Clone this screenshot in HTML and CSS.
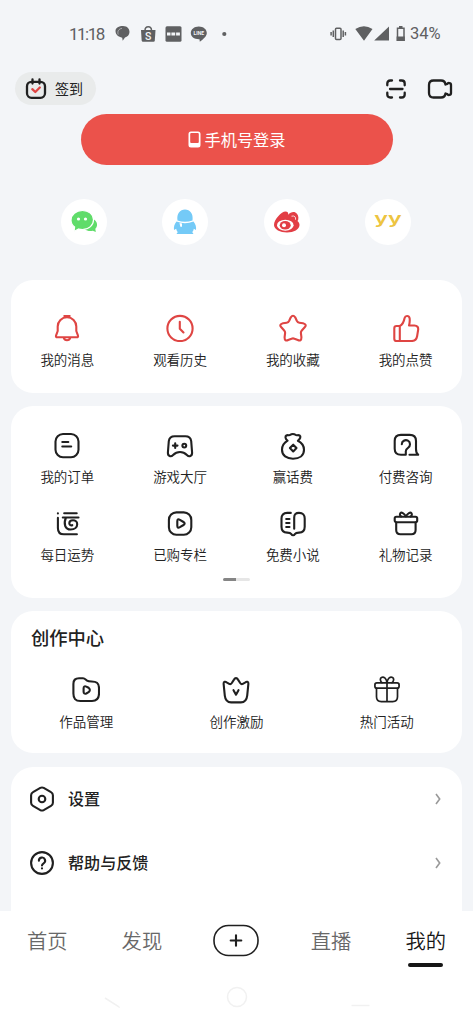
FILE: index.html
```html
<!DOCTYPE html>
<html lang="zh-CN">
<head>
<meta charset="utf-8">
<title>我的</title>
<link rel="stylesheet" href="styles.css">
</head>
<body>
<div class="screen">
  <main class="content">
    <div class="status">
      <span class="clock">11:18</span>
      <svg class="apps" width="116" height="20" viewBox="0 0 116 20">
        <path d="M1.500 7C1.500 3.500 5 2 9 2c4.500 0 6.500 3 6.500 6 0 3-2.300 5-4.500 5.500l-2.300 3.200-.5-3C4.500 13 1.500 10.500 1.500 7z"/>
        <path class="knock" d="M4.200 10.500C3.200 7.500 4.500 5 8 4.300"/>
        <path d="M27 6h14.500l-.7 10.500q-.1 1.200-1.300 1.200h-10.500q-1.200 0-1.300-1.200z"/>
        <path class="ring" d="M31 6.500C31 1.500 37.500 1.500 37.500 6.500"/>
        <text class="mark light" x="34.300" y="15.500" font-size="10.500">S</text>
        <rect x="51.500" y="2.300" width="16" height="15.500" rx="1.500"/>
        <path class="boxes" d="M53 10h3.500M57.400 10h3.800M62.100 10h3.800"/>
        <path d="M84.800 2.500c4.600 0 8 2.900 8 6.500 0 3.200-3.200 6-7 8.700l-.3-2.500c-5.200.2-8.700-2.500-8.700-6.200 0-3.600 3.400-6.500 8-6.500z"/>
        <text class="mark" x="84.800" y="10.800" font-size="5">LINE</text>
        <circle cx="110.300" cy="10" r="2.100"/>
      </svg>
      <svg class="signals" width="76" height="20" viewBox="0 0 76 20">
        <rect class="ring" x="5.500" y="4.200" width="5.500" height="11.300" rx="1"/>
        <path class="ring" d="M3.300 6.500v6.500M1.100 8v3.500M13.200 6.500v6.500M15.400 8v3.500"/>
        <path d="M25.300 5Q34-.5 42.500 5L34 16.700zM59 2.500v14H44.200z"/>
        <path class="ring" d="M67.500 4.300h6.500v12h-6.500z"/>
        <path d="M69 2h3.500v2H69zM66.600 12.500h8.200v4.500h-8.200z"/>
      </svg>
      <span class="percent">34%</span>
    </div>

    <header class="top">
      <button class="signin">
        <svg class="ico" width="22" height="22" viewBox="0 0 22 22"><rect x="2" y="3.800" width="18" height="16" rx="4.500"/><path d="M7.500 1.500v4M14.500 1.500v4"/><path class="red" d="M7.300 11.200l3 2.800 4.500-4.500"/></svg>
        <span>签到</span>
      </button>
      <svg class="ico scan" width="22" height="22" viewBox="0 0 22 22"><path d="M2.300 7.300V5.500q0-3 3-3H7M15 2.500h1.700q3 0 3 3v1.800M19.700 14.700v1.800q0 3-3 3H15M7 19.500H5.300q-3 0-3-3v-1.800M5 11h12.500"/></svg>
      <svg class="ico" width="26" height="22" viewBox="0 0 26 22"><path d="M6.500 2.500h7.500q4 0 4.500 4l1.800-.6c.5-1.300 3.700-1.300 3.700.8v8.600c0 2.100-3.200 2.100-3.700.8l-1.800-.6q-.5 4-4.500 4H6.500q-4.500 0-4.500-4.500V7q0-4.500 4.500-4.500z"/></svg>
    </header>

    <button class="login">
      <svg width="13" height="17" viewBox="0 0 13 17"><path fill="#fff" fill-rule="evenodd" d="M3 .5h7q2.500 0 2.500 2.500v11q0 2.500-2.500 2.500H3Q.5 16.500.5 14V3Q.5.500 3 .5zM3.200 2q-1 0-1 1v8q0 1 1 1h6.600q1 0 1-1V3q0-1-1-1z"/></svg>
      <span>手机号登录</span>
    </button>

    <div class="social">
      <a class="disc"><svg width="28" height="28" viewBox="0 0 28 28"><path fill="#60dc6a" d="M21 10.500c4.500 1 6.500 4 6 7-.2 1.500-1 2.500-1.700 3.300l.5 3.200-3-1.300c-3 .8-6 .2-8-1.500z"/><path fill="#60dc6a" stroke="#fff" stroke-width="1.200" d="M12.500 2.500c6.300 0 11 4 11 9.300s-4.500 9.700-11 9.700c-1.500 0-2.700-.2-3.800-.5L4 23.500l.6-4.500C2.300 17.300 1 15 1 12.200c0-5.400 5-9.700 11.500-9.700z"/><circle cx="8.500" cy="11" r="1.600" fill="#fff"/><circle cx="15.500" cy="11" r="1.600" fill="#fff"/></svg></a>
      <a class="disc"><svg width="28" height="28" viewBox="0 0 28 28"><path fill="#74caf7" d="M6.500 12.500C5.500 5.500 9 1.500 14 1.500s8.500 4 7.500 11q-7.500 2.500-15 0zM5.500 13.500q8.500 3.300 17 0c2 2.500 3 5.500 2.500 8.500l-2.200-1.200c-.3 1.500-.8 2.500-1.600 3.300l1.300 2H5.500l1.300-2c-.8-.8-1.300-1.800-1.600-3.300L3 22c-.5-3 .5-6 2.500-8.500z"/><path fill="#fff" d="M8.500 15l2.500.6v3.200H9.300z"/></svg></a>
      <a class="disc"><svg width="28" height="28" viewBox="0 0 28 28"><path fill="#e23e45" d="M12.500 3.500c2 0 3 1.200 2.700 3.200 2-2.300 5-3.400 7.200-2.200 2.500 1.300 3.500 4 2.800 7.200l-.7 1.300c1.500 1.200 2 2.500 2 4 0 4.500-5.800 7.500-12.500 7.500S1 21.500 1 17C1 11.500 8.500 3.500 12.500 3.500z"/><path d="M18.500 8.200c3-.8 4.600.8 4 3.500" fill="none" stroke="#fff" stroke-width=".8"/><ellipse cx="12.300" cy="17.200" rx="8.300" ry="5.500" fill="#fff"/><ellipse cx="12.200" cy="17.200" rx="5.500" ry="4.300" fill="#e23e45"/><circle cx="11" cy="17.300" r="2" fill="#fff"/></svg></a>
      <a class="disc"><svg width="28" height="28" viewBox="0 0 28 28"><text class="yy" x="14" y="16" transform="translate(-7 0) scale(1.500 1)">yy</text></svg></a>
    </div>

    <section class="card quick">
      <div class="cell"><svg class="ico red" width="28" height="28" viewBox="0 0 28 28"><path d="M4.700 12.500a9.300 9.300 0 0 1 18.600 0V17l1.600 4.300q.7 2-1.400 2h-19q-2.100 0-1.400-2L4.700 17zM11.300 2h5.400M10.800 24a3.300 2.900 0 0 0 6.400 0"/></svg><span>我的消息</span></div>
      <div class="cell"><svg class="ico red" width="28" height="28" viewBox="0 0 28 28"><circle cx="14" cy="14.500" r="12.600"/><path d="M13.800 7.700v7l3.700 3.800"/></svg><span>观看历史</span></div>
      <div class="cell"><svg class="ico red" width="28" height="28" viewBox="0 0 28 28"><path d="M11.800 3.300Q14 .2 16.200 3.300L17.800 6.800Q18.600 8.400 20.300 8.700L24 9.300Q28.300 10.400 25.700 13.300L22.800 16.500Q21.700 17.700 21.900 19.200L22.400 23.200Q22.500 27.600 18.800 26L15.500 24.700Q14 24 12.500 24.700L9.200 26Q5.500 27.600 5.600 23.200L6.100 19.200Q6.300 17.700 5.200 16.500L2.300 13.300Q-.3 10.400 4 9.300L7.700 8.700Q9.400 8.400 10.200 6.800Z"/></svg><span>我的收藏</span></div>
      <div class="cell"><svg class="ico red" width="28" height="28" viewBox="0 0 28 28"><path d="M7.800 12H4.500q-2.200 0-2.200 2.300v10.400q0 2.300 2.200 2.300H19.500c3.500 0 5-1.500 5.600-4.800l1-6c.5-3-.9-4.700-3.700-4.700H17c.7-2.500.9-5.300.6-7.300-.6-2.800-4.300-2.900-5-.2C11.900 7.700 11 10.500 7.800 12zv15"/></svg><span>我的点赞</span></div>
    </section>

    <section class="card services">
      <div class="cell"><svg class="ico" width="28" height="28" viewBox="0 0 28 28"><rect x="2.500" y="2" width="23" height="23.200" rx="7.500"/><path d="M9.300 10h6M9.300 14.500h8.900"/></svg><span>我的订单</span></div>
      <div class="cell"><svg class="ico" width="28" height="28" viewBox="0 0 28 28"><path d="M8.700 4.200h10.600c3.500 0 5.500 1.800 5.900 5l.9 11.300c.2 3.800-3 4.700-5.200 2.500-2-2-4-3-6.900-3s-4.900 1-6.900 3c-2.200 2.200-5.400 1.300-5.200-2.500l.9-11.300c.4-3.200 2.400-5 5.900-5zM9.200 11.300v4.600M6.900 13.600h4.600"/><circle cx="18.300" cy="13.600" r="1.900"/></svg><span>游戏大厅</span></div>
      <div class="cell"><svg class="ico" width="28" height="28" viewBox="0 0 28 28"><path d="M8.600 8.700C6 6.500 6 4.400 7.400 3.500s2.900.3 4-.7 3.800-1 5 0 2.700-.2 4.200.7.900 3-1.700 5.200c3.900 2 6.100 5.200 6.100 9 0 6-4.700 9-11 9s-11-3-11-9c0-3.800 2.200-7 5.600-9z"/><path d="M14.200 12.700l3.300 3.400-3.300 3.400-3.300-3.400z"/></svg><span>赢话费</span></div>
      <div class="cell"><svg class="ico" width="28" height="28" viewBox="0 0 28 28"><path d="M9.800 12.300a4.100 4.100 0 1 1 6.200 3.500c-1.600 1-2.200 1.800-2.200 3.500v3.400H9c-4.300 0-6.300-2-6.300-6V9c0-4.200 2-6.100 6.300-6.100h8.700c4.300 0 6.300 2 6.300 6.100v8c0 3 .5 4.700 2.200 5.700h-8.700"/></svg><span>付费咨询</span></div>
      <div class="cell"><svg class="ico" width="28" height="28" viewBox="0 0 28 28"><path d="M4.900 3.300v.1M11.200 3.300h12.500M9.800 7.500h15.700M4.900 7.900v10c0 4.600 2 6.400 6 6.400h13M12.800 8c-2.500 6-.7 11.500 4.900 11.500 4 0 6.500-2.300 6.500-5.300 0-2.300-2-3.900-4.200-3.900-2.300 0-3.700 1.300-3.700 3s1.600 2.500 3 1.900"/></svg><span>每日运势</span></div>
      <div class="cell"><svg class="ico" width="28" height="28" viewBox="0 0 28 28"><rect x="2.900" y="2.400" width="22.400" height="22.400" rx="7.500"/><path d="M11.300 11.300q0-2.900 2.600-1.500l3.600 2.200q2.300 1.500 0 3l-3.600 2.200q-2.600 1.400-2.600-1.500z"/></svg><span>已购专栏</span></div>
      <div class="cell"><svg class="ico" width="28" height="28" viewBox="0 0 28 28"><path d="M11.800 2.900H8.200C4.200 2.900 2.500 5 2.500 8.600v8.200c0 4 1.700 5.800 5.700 5.800 2.300 0 3.300.3 4.200 1.600.8 1.500 2.600 1.500 3.400 0 .9-1.300 1.900-1.600 4.200-1.600 4 0 5.700-1.800 5.700-5.800V8.600c0-3.600-1.700-5.700-5.700-5.700-3.200 0-4.800 1.500-4.800 4.500v11.400M7.200 9h3.300M7.200 13h3.300M7.200 17h3.300"/></svg><span>免费小说</span></div>
      <div class="cell"><svg class="ico" width="28" height="28" viewBox="0 0 28 28"><rect x="2.700" y="6.700" width="22.500" height="5.500" rx="1.700"/><path d="M4.200 12.500V20q0 4.200 4.200 4.200h11q4.200 0 4.200-4.200v-7.500M13.900 6.300C12 3.200 9.500 1.800 8.400 3.200S8.300 6 9.100 6.500M13.900 6.300c1.900-3.100 4.400-4.500 5.500-3.100s.1 2.800-.7 3.300"/></svg><span>礼物记录</span></div>
      <div class="pager"></div>
    </section>

    <section class="card creator">
      <h2>创作中心</h2>
      <div class="cell"><svg class="ico" width="28" height="28" viewBox="0 0 28 28"><path d="M1.400 8c0-4 1.800-5.800 5.600-5.800h4c1.800 0 2.800 1.600 4 2.400s2 .9 4.700.9c5.300 0 7.300 1.700 7.300 6.500v5.500c0 5-2 7.500-7 7.500H8.400c-5 0-7-2.500-7-7.500z"/><path d="M11.600 12.400q0-2.900 2.700-1.800l2.300 1.200q2.500 2.100 0 4.400l-2.300 1.300q-2.700.9-2.700-1.800z"/></svg><span>作品管理</span></div>
      <div class="cell"><svg class="ico" width="28" height="28" viewBox="0 0 28 28"><path d="M1.600 7.700c-.1-2.300 1.800-2.300 3-1.400l2.600 1.500c1.100.6 1.900.2 2.600-.8L12 3.600c1.100-2 2.900-2 4 0L18.200 7c.7 1 1.500 1.400 2.600.8l2.600-1.500c1.200-.9 3.100-.9 3 1.400l-1.200 12c-.5 4.500-2.200 6.700-6.300 6.700h-9.800c-4.100 0-5.800-2.200-6.300-6.700z"/><path d="M11.500 14.200l2.500 4.500 2.500-4.500"/></svg><span>创作激励</span></div>
      <div class="cell"><svg class="ico thin" width="28" height="28" viewBox="0 0 28 28"><rect x="1.900" y="6.900" width="24.200" height="5.300" rx="2"/><path d="M3.500 12.500v8.300q0 4.800 4.800 4.800h11.400q4.800 0 4.800-4.800v-8.300M14 6.900v18.500M14 6.700C13.500 2 10.500.4 8.500 1.500S7.500 5.500 9 6.700M14 6.700c.5-4.700 3.500-6.300 5.500-5.200s1 4-.5 5.200"/></svg><span>热门活动</span></div>
    </section>

    <section class="card settings">
      <div class="row"><svg class="ico" width="28" height="28" viewBox="0 0 28 28"><path d="M12.300 2.900q1.700-.9 3.400 0l7.300 4.200q1.900 1 1.900 3.100v7.600q0 2.100-1.900 3.100l-7.300 4.200q-1.700.9-3.400 0L5 20.900q-1.900-1-1.900-3.100v-7.600q0-2.100 1.900-3.100z"/><circle cx="14" cy="14" r="3.300"/></svg><span>设置</span><svg class="chev" width="8" height="12" viewBox="0 0 8 12"><path d="M2 1l3.700 5L2 11"/></svg></div>
      <div class="row"><svg class="ico" width="28" height="28" viewBox="0 0 28 28"><circle cx="14" cy="14" r="10.900"/><path d="M10.900 11.800a3.100 3.100 0 1 1 4.700 2.500c-1.100.7-1.600 1.200-1.600 2.200M14 19.300v.1"/></svg><span>帮助与反馈</span><svg class="chev" width="8" height="12" viewBox="0 0 8 12"><path d="M2 1l3.700 5L2 11"/></svg></div>
    </section>
  </main>

  <nav class="tabs">
    <a>首页</a>
    <a>发现</a>
    <a class="add"><svg class="ico" width="48" height="34" viewBox="0 0 48 34"><rect class="outline" x="2" y="1.500" width="44" height="30" rx="14.500"/><path d="M18.700 16.500h10.600M24 11.200v10.600"/></svg></a>
    <a>直播</a>
    <a class="active">我的</a>
  </nav>
  <div class="sysnav">
    <svg width="280" height="24" viewBox="0 0 280 24"><path d="M8 13l14 9V4" stroke-dasharray="17 40"/><circle cx="140" cy="12" r="9.500"/><path d="M254.500 20.500h18"/></svg>
  </div>
</div>
</body>
</html>
```

FILE: styles.css
```css
* { box-sizing: border-box; }
body {
  margin: 0;
  font-family: "Noto Sans CJK SC", sans-serif;
  color: #222;
  background: #f3f5f8;
}
button { border: 0; font: inherit; color: inherit; }
svg { display: block; flex: none; }
.screen { width: 473px; height: 1024px; overflow: hidden; display: flex; flex-direction: column; }
.content { height: 911px; flex: none; overflow: hidden; }

.ico { fill: none; stroke: #202020; stroke-width: 2.100; stroke-linecap: round; stroke-linejoin: round; }
.ico.red, .ico .red { stroke: #df4543; }
.ico.thin { stroke-width: 1.700; }

.status {
  display: flex;
  align-items: center;
  height: 67px;
  padding: 0 31px 0 69px;
  font-family: Roboto, sans-serif;
  font-size: 16.500px;
  color: #5f6062;
}
.clock { width: 45px; letter-spacing: -1.500px; font-size: 17px; }
.apps, .signals { fill: #5f6062; }
.signals { margin-left: auto; margin-right: 4px; }
.percent { width: 32px; white-space: nowrap; }
.knock { fill: none; stroke: #f3f5f8; stroke-width: .5; }
.ring { fill: none; stroke: #5f6062; stroke-width: 1.500; }
.boxes { fill: none; stroke: #f3f5f8; stroke-width: 3; }
.mark { fill: #f3f5f8; font-family: Roboto, sans-serif; font-weight: 700; text-anchor: middle; }
.mark.light { font-weight: 500; }

.top { display: flex; align-items: center; height: 43px; padding: 0 20px 0 15px; }
.signin {
  display: flex;
  align-items: center;
  gap: 8px;
  width: 81px;
  height: 33px;
  padding: 0 0 0 10px;
  border-radius: 17px;
  background: #e9ebeb;
  font-size: 14px;
}
.signin span, .login span { padding-bottom: 2px; }
.scan { margin-left: auto; margin-right: 20px; }
.top .ico { stroke-width: 2.300; }

.login {
  display: flex;
  align-items: center;
  justify-content: center;
  gap: 4px;
  width: 312px;
  height: 51px;
  margin: 4px auto 0;
  border-radius: 26px;
  background: #eb524b;
  color: #fff;
  font-size: 16.200px;
}

.social { display: flex; justify-content: space-between; padding: 34px 62px 0 61px; }
.disc { display: flex; align-items: center; justify-content: center; width: 46px; height: 46px; border-radius: 50%; background: #fff; }
.yy { font-family: Inter, sans-serif; font-size: 15.500px; font-weight: 600; fill: #edc440; text-anchor: middle; }

.card { width: 451px; margin: 0 auto; border-radius: 22px; background: #fff; }
.cell { display: flex; flex-direction: column; align-items: center; gap: 7px; font-size: 13.500px; font-weight: 350; line-height: 20px; }
.quick { display: grid; grid-template-columns: repeat(4, 1fr); height: 113px; margin-top: 35px; padding-top: 34px; }
.services {
  display: grid;
  grid-template-columns: repeat(4, 1fr);
  grid-template-rows: 55px 55px 3px;
  row-gap: 23px;
  height: 192px;
  margin-top: 13px;
  padding-top: 26px;
}
.services .cell { gap: 6px; }
.pager {
  grid-column: 1 / -1;
  justify-self: center;
  width: 27px;
  height: 3px;
  margin-top: -10px;
  border-radius: 2px;
  background: linear-gradient(90deg, #858585 50%, #e6e6e6 50%);
}
.creator { display: grid; grid-template-columns: repeat(3, 1fr); grid-template-rows: 37px auto; row-gap: 12px; height: 142px; margin-top: 13px; padding-top: 15px; }
.creator .cell { padding-top: 1px; }
.creator h2 { grid-column: 1 / -1; margin: 0; padding-left: 20px; font-size: 18.300px; font-weight: 500; line-height: 22px; }
.settings { height: 200px; margin-top: 14px; padding: 0 20px 0 17px; }
.row { display: flex; align-items: center; height: 64px; font-size: 16.100px; font-weight: 500; }
.row span { margin-left: 12px; margin-right: auto; padding-bottom: 2px; }
.chev { fill: none; stroke: #999; stroke-width: 1.600; }

.tabs { display: grid; grid-template-columns: repeat(5, 1fr); height: 60px; flex: none; background: #fff; }
.tabs a { display: flex; flex-direction: column; align-items: center; padding-top: 14px; font-size: 20.300px; font-weight: 350; line-height: 30px; color: #686868; }
.tabs .add { padding-top: 13px; }
.tabs .active { color: #161616; }
.tabs .active::after { content: ""; width: 35px; height: 4px; margin-top: 8px; border-radius: 2px; background: #161616; }
.outline { stroke-width: 1.600; }
.sysnav { display: flex; justify-content: center; flex: 1; padding-top: 14px; background: #fff; }
.sysnav svg { fill: none; stroke: #f1f1f1; stroke-width: 1.500; }
```
